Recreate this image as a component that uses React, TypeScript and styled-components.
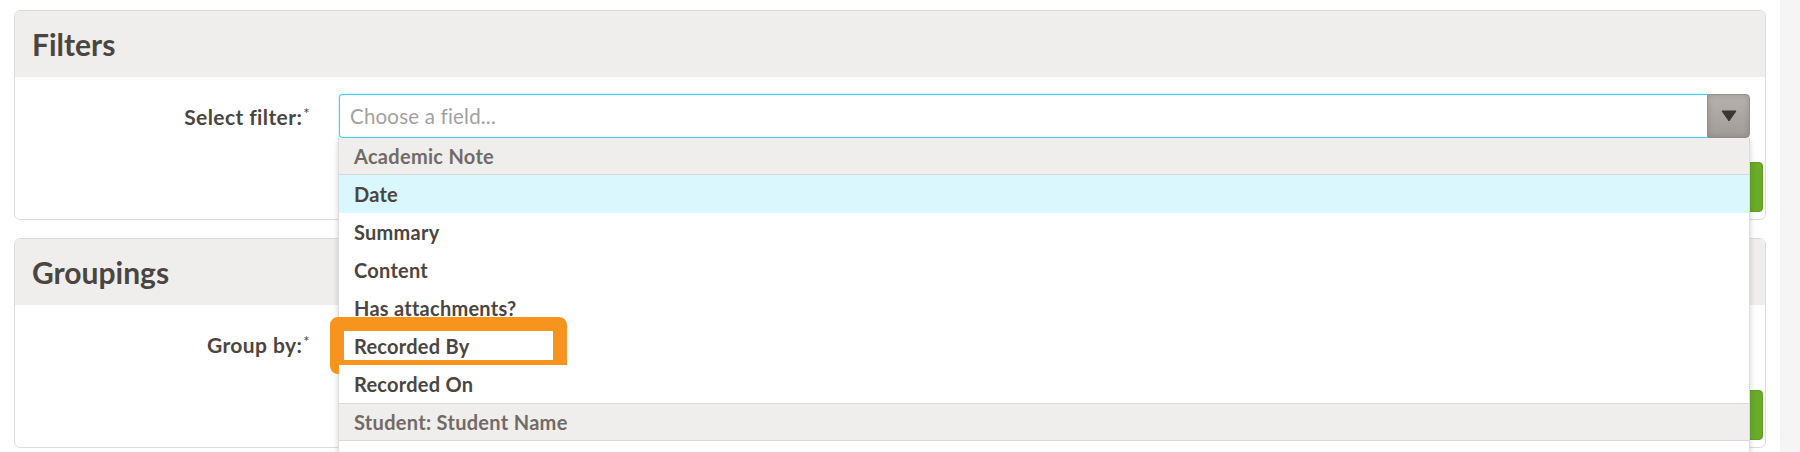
import React from "react";
import styled, { createGlobalStyle } from "styled-components";

const GlobalStyle = createGlobalStyle`
  html, body {
    margin: 0;
    padding: 0;
    overflow: hidden;
    background: #fff;
  }

  body {
    font-family: Lato, "Open Sans", sans-serif;
    color: #4b4542;
  }
`;

const Page = styled.div`
  display: flex;
  height: 452px;
`;

const Main = styled.main`
  flex: 1;
  padding: 10px 14px 0 14px;
`;

const ScrollTrack = styled.div`
  width: 20px;
  background-color: #f5f5f5;
`;

const Panel = styled.section`
  border: 1px solid #dcdcdc;
  border-radius: 6px;
  background: #fff;
  margin-bottom: 18px;
`;

const PanelHeader = styled.header`
  height: 66px;
  display: flex;
  align-items: center;
  padding-left: 17px;
  background-color: #efeeec;
  border-radius: 6px 6px 0 0;

  h2 {
    margin: 0;
    font-size: 30px;
    font-weight: 700;
    color: #4b4542;
  }
`;

const PanelBody = styled.div`
  padding: 17px 2px 7px 0;
  display: flex;
  flex-direction: column;
  gap: 24px;
`;

const FieldRow = styled.div`
  display: grid;
  grid-template-columns: 295px 1fr;
  column-gap: 29px;
  align-items: center;
  padding-right: 13px;
`;

const Label = styled.label`
  text-align: right;
  font-size: 21px;
  letter-spacing: 0.4px;
  font-weight: 700;
  color: #4b4542;

  sup {
    font-size: 15px;
    font-weight: 400;
    vertical-align: 6px;
    margin-left: 1px;
  }
`;

const SelectWrap = styled.div`
  position: relative;
`;

const SelectBox = styled.div<{ $focused?: boolean }>`
  display: flex;
  height: 44px;

  .value {
    flex: 1;
    display: flex;
    align-items: center;
    padding-left: 10px;
    border: 1px solid ${p => (p.$focused ? "#3fd3f3" : "#cfcfcf")};
    border-right: none;
    border-radius: 4px 0 0 4px;
    box-shadow: ${p => (p.$focused ? "0 0 2px rgba(63, 211, 243, 0.7)" : "none")};
    font-size: 20.5px;
    letter-spacing: 0.2px;
    color: #a3a09e;
  }
`;

const ArrowButton = styled.div`
  width: 41px;
  display: flex;
  align-items: center;
  justify-content: center;
  border: 1px solid #948f8b;
  border-radius: 0 4px 4px 0;
  background: linear-gradient(#b6b1ad, #a19c98);
  box-shadow: inset 0 0 6px rgba(0, 0, 0, 0.15);
`;

const Menu = styled.ul`
  position: absolute;
  z-index: 10;
  top: 100%;
  left: -1px;
  right: 0;
  margin: 0;
  padding: 0;
  list-style: none;
  background: #fff;
  border: 1px solid #dcdcdc;
  border-top: none;
  box-shadow: 0 4px 6px rgba(0, 0, 0, 0.18);
`;

const GroupRow = styled.li<{ $first?: boolean }>`
  height: 36px;
  display: flex;
  align-items: center;
  padding-left: 15px;
  background-color: #efeeec;
  border-top: ${p => (p.$first ? "none" : "1px solid #d8d8d8")};
  border-bottom: 1px solid #d8d8d8;
  font-size: 20px;
  letter-spacing: 0.3px;
  font-weight: 700;
  color: #716a67;
`;

const OptionRow = styled.li<{ $active?: boolean }>`
  position: relative;
  height: 38px;
  display: flex;
  align-items: center;
  padding-left: 15px;
  background-color: ${p => (p.$active ? "#d9f7fc" : "#fff")};
  font-size: 20px;
  letter-spacing: 0.25px;
  font-weight: 700;
  color: #4b4542;
`;

const Highlight = styled.span`
  position: absolute;
  left: -9px;
  top: -10px;
  width: 237px;
  height: 57px;
  box-sizing: border-box;
  border: 14px solid #f7941e;
  border-radius: 8px;
  pointer-events: none;
`;

const Actions = styled.div`
  display: flex;
  justify-content: flex-end;
`;

const SubmitButton = styled.button`
  width: 130px;
  height: 50px;
  border: 1px solid #5f9c22;
  border-radius: 4px;
  background-color: #6aab28;
`;

function Caret() {
  return (
    <svg width="16" height="12" viewBox="0 0 16 12">
      <path d="M1 1h14l-7 10z" fill="#3b3735" stroke="#3b3735" strokeLinejoin="round" />
    </svg>
  );
}

const noteFields = ["Summary", "Content", "Has attachments?"];

export default function App() {
  return (
    <>
      <GlobalStyle />
      <Page>
        <Main>
          <Panel>
            <PanelHeader>
              <h2>Filters</h2>
            </PanelHeader>
            <PanelBody>
              <FieldRow>
                <Label>
                  Select filter:<sup>*</sup>
                </Label>
                <SelectWrap>
                  <SelectBox $focused>
                    <span className="value">Choose a field...</span>
                    <ArrowButton>
                      <Caret />
                    </ArrowButton>
                  </SelectBox>
                  <Menu>
                    <GroupRow $first>Academic Note</GroupRow>
                    <OptionRow $active>Date</OptionRow>
                    {noteFields.map(f => (
                      <OptionRow key={f}>{f}</OptionRow>
                    ))}
                    <OptionRow>
                      Recorded By
                      <Highlight />
                    </OptionRow>
                    <OptionRow>Recorded On</OptionRow>
                    <GroupRow>Student: Student Name</GroupRow>
                    <OptionRow>Name</OptionRow>
                  </Menu>
                </SelectWrap>
              </FieldRow>
              <Actions>
                <SubmitButton />
              </Actions>
            </PanelBody>
          </Panel>

          <Panel>
            <PanelHeader>
              <h2>Groupings</h2>
            </PanelHeader>
            <PanelBody>
              <FieldRow>
                <Label>
                  Group by:<sup>*</sup>
                </Label>
                <SelectWrap>
                  <SelectBox>
                    <span className="value">Choose a field...</span>
                    <ArrowButton>
                      <Caret />
                    </ArrowButton>
                  </SelectBox>
                </SelectWrap>
              </FieldRow>
              <Actions>
                <SubmitButton />
              </Actions>
            </PanelBody>
          </Panel>
        </Main>
        <ScrollTrack />
      </Page>
    </>
  );
}
